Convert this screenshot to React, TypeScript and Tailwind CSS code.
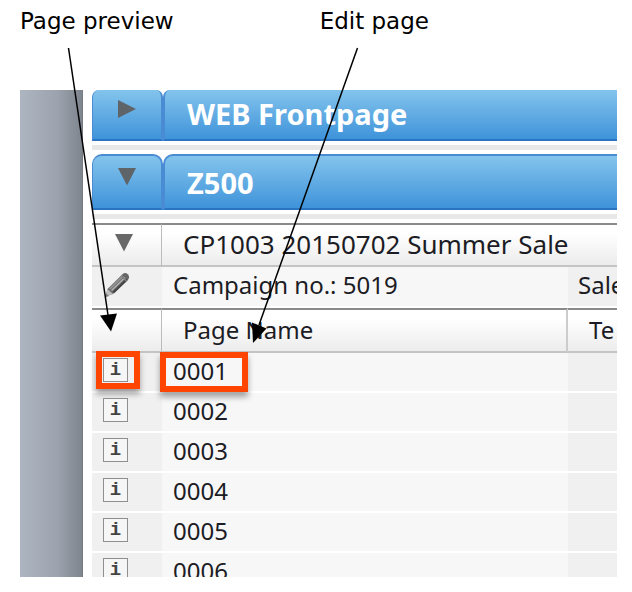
import { useState } from "react";

const PAGES = ["0001", "0002", "0003", "0004", "0005", "0006"];

function Triangle({ open, className }: { open: boolean; className: string }) {
  return (
    <svg viewBox="0 0 18 18" className={`h-[18px] w-[18px] ${className}`} fill="currentColor">
      {open ? <path d="M0 0H18L9 17.5Z" /> : <path d="M0 0V18L18 9Z" />}
    </svg>
  );
}

function PencilIcon() {
  return (
    <svg viewBox="0 0 26 26" className="h-[26px] w-[26px]">
      <path d="M1.5 24.5L3.5 17L18.5 2.2Q21 0 23.8 2.2Q26.2 4.8 24.2 7.5L9 22Z" fill="#666" />
      <path d="M1.5 24.5L3.5 17L9 22Z" fill="#bdbdbd" />
      <path d="M5.5 17L19 4" stroke="#929292" strokeWidth="2" />
      <path d="M7.5 18.5L21 5.5" stroke="#b4b4b4" strokeWidth="1.5" />
      <path d="M9.5 20.5L23 7.5" stroke="#444" strokeWidth="2" />
      <path d="M17.5 4L22.5 9" stroke="#808080" strokeWidth="1.5" />
      <path d="M1 25.5L2 21.5L5 24Z" fill="#777" />
    </svg>
  );
}

function GroupHeader({ title, clipped = false }: { title: string; clipped?: boolean }) {
  const [open, setOpen] = useState(!clipped);
  const tab =
    "border-b-2 border-[#4a8cd4] border-b-[#2b74c2] bg-linear-to-b from-[#83c4ec] to-[#3e93da]";
  const shape = clipped ? "h-[51px]" : "h-[56px] border-t-2";

  return (
    <>
      <div className="grid grid-cols-[71px_1fr]">
        <button
          onClick={() => setOpen((v) => !v)}
          aria-label={`Toggle ${title}`}
          className={`flex justify-center border-r-2 border-l ${tab} ${shape} ${
            clipped ? "rounded-t-[7px] pt-[10px]" : "rounded-t-[10px] pt-3"
          }`}
        >
          <Triangle open={open} className="text-[#5f6468]" />
        </button>
        <h2
          className={`flex items-center border-l-2 pl-[22px] text-[29px] leading-none font-bold whitespace-nowrap text-white ${tab} ${shape} ${
            clipped ? "rounded-tl-[7px] pb-0.5" : "rounded-tl-[10px]"
          }`}
        >
          {title}
        </h2>
      </div>
      <div className="py-1">
        <div className="h-[5px] bg-[#e8e8e8]" />
      </div>
    </>
  );
}

function PageRow({ name, last }: { name: string; last: boolean }) {
  const marked = name === "0001";
  const height = last ? "h-6" : "h-[38px]";
  const gap = last ? "" : "border-b-2 border-white";

  return (
    <tr>
      <td className={`bg-[#f0f0f0] p-0 ${gap}`}>
        <div className={`relative flex pt-[5px] pl-[11px] ${height} ${last ? "overflow-hidden" : ""}`}>
          <button
            aria-label={`Preview page ${name}`}
            className="flex h-6 w-[25px] shrink-0 items-center justify-center border border-[#8f8f8f] bg-[#f6f6f6] font-['Liberation_Mono',monospace] text-[19px] leading-none font-bold text-[#444]"
          >
            i
          </button>
          {marked && (
            <span className="pointer-events-none absolute -top-0.5 left-1 h-[38px] w-[44px] border-6 border-[#ff4500] shadow-[0_5px_6px_rgba(0,0,0,0.35)]" />
          )}
        </div>
      </td>
      <td className={`bg-[#f7f7f7] p-0 ${gap}`}>
        <div
          className={`relative flex pl-[11px] ${height} ${
            last ? "items-start overflow-hidden pt-1.5" : "items-center pb-0.5"
          }`}
        >
          <a href={`#${name}`} className="text-2xl leading-6 text-[#1c1c24]">
            {name}
          </a>
          {marked && (
            <span className="pointer-events-none absolute -top-px -left-0.5 h-10 w-[88px] border-6 border-[#ff4500] shadow-[0_5px_6px_rgba(0,0,0,0.35)]" />
          )}
        </div>
      </td>
      <td className={`bg-[#f0f0f0] p-0 ${gap}`} />
    </tr>
  );
}

function Callouts() {
  return (
    <svg
      className="pointer-events-none absolute top-0 left-0 h-[360px] w-[400px]"
      viewBox="0 0 400 360"
      stroke="#000"
      strokeWidth="1.5"
    >
      <path d="M68.5 48L108 315" />
      <path d="M100 315.5L117 313.5L111 331.5Z" strokeWidth="0" />
      <path d="M357.5 48L259 325" />
      <path d="M252 322.5L266.5 328.5L253 343Z" strokeWidth="0" />
    </svg>
  );
}

export default function App() {
  const [open, setOpen] = useState(true);
  const bar = "border-t-2 border-b-2 border-t-[#8a8a8a] border-b-[#c4c4c4] bg-linear-to-b from-white from-20% to-[#ececec] p-0";

  return (
    <main className="relative bg-white pr-[15px] pb-[15px] pl-5 text-black">
      <div className="flex h-[90px] gap-[146px] pt-[9px] font-['DejaVu_Sans',sans-serif] text-[23px] leading-6 whitespace-nowrap">
        <p>Page preview</p>
        <p>Edit page</p>
      </div>

      <div className="flex overflow-hidden font-['Noto_Sans',sans-serif]">
        <aside className="w-[63px] shrink-0 border-r border-[#777c84] bg-linear-to-r from-[#adb5c1] via-[#9ca3ae] via-60% to-[#7f858e]" />
        <section className="min-w-0 flex-1 pl-[9px]">
          <GroupHeader title="WEB Frontpage" clipped />
          <GroupHeader title="Z500" />

          <table className="w-full table-fixed border-separate border-spacing-0 text-left text-2xl leading-7 whitespace-nowrap text-[#1c1c24]">
            <colgroup>
              <col className="w-[70px]" />
              <col className="w-[406px]" />
              <col />
            </colgroup>
            <thead>
              <tr className="h-11">
                <th className={`border-r border-r-[#bbb] ${bar}`}>
                  <button
                    onClick={() => setOpen((v) => !v)}
                    aria-label="Toggle campaign"
                    className="block pb-1 pl-[23px]"
                  >
                    <Triangle open={open} className="text-[#686868]" />
                  </button>
                </th>
                <th colSpan={2} className={bar}>
                  <div className="pb-0.5 pl-[21px] text-[26px] font-normal">
                    CP1003 20150702 Summer Sale
                  </div>
                </th>
              </tr>
            </thead>
            <tbody>
              <tr className="h-[41px]">
                <td className="border-b-2 border-white bg-[#f0f0f0] p-0">
                  <button aria-label="Edit campaign" className="block pb-1 pl-3">
                    <PencilIcon />
                  </button>
                </td>
                <td className="border-b-2 border-white bg-[#f7f7f7] p-0 pb-1 pl-[11px]">
                  Campaign no.: 5019
                </td>
                <td className="overflow-hidden border-b-2 border-white bg-[#f0f0f0] p-0 pb-1 pl-2.5">
                  Sale
                </td>
              </tr>
              <tr className="h-[45px]">
                <th className={`border-r border-r-[#bbb] ${bar}`} />
                <th className={`border-r-2 border-r-[#ccc] ${bar}`}>
                  <div className="pb-0.5 pl-[21px] font-normal">Page Name</div>
                </th>
                <th className={`overflow-hidden ${bar}`}>
                  <div className="pb-0.5 pl-[21px] font-normal">Te</div>
                </th>
              </tr>
              {PAGES.map((name, i) => (
                <PageRow key={name} name={name} last={i === PAGES.length - 1} />
              ))}
            </tbody>
          </table>
        </section>
      </div>

      <Callouts />
    </main>
  );
}
